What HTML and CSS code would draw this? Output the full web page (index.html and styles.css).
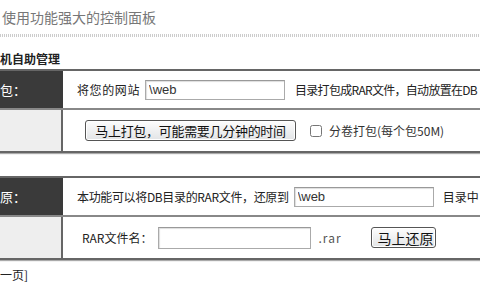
FILE: index.html
```html
<!DOCTYPE html>
<html lang="zh-CN">
<head>
  <meta charset="UTF-8" />
  <title>主机自助管理</title>
  <link rel="stylesheet" href="styles.css">
</head>
<body>
  <h2 class="title">使用功能强大的控制面板</h2>
  <div class="dots"></div>

  <h3 class="section">机自助管理</h3>

  <div class="panel">
    <div class="row">
      <div class="label">包：</div>
      <div class="field">
        <span class="lead">将您的网站</span>
        <input class="text path" type="text" value="\web">
        <span class="after tighter">目录打包成RAR文件，自动放置在DB</span>
      </div>
    </div>
    <div class="row sub">
      <div class="label"></div>
      <div class="field pack">
        <button class="btn wide">马上打包，可能需要几分钟的时间</button>
        <label class="check"><input type="checkbox"> 分卷打包(每个包50M)</label>
      </div>
    </div>
  </div>

  <div class="panel">
    <div class="row">
      <div class="label">原：</div>
      <div class="field">
        <span class="tight">本功能可以将DB目录的RAR文件，还原到</span>
        <input class="text path" type="text" value="\web">
        <span class="after short">目录中</span>
      </div>
    </div>
    <div class="row sub">
      <div class="label"></div>
      <div class="field restore">
        <span>RAR文件名：</span>
        <input class="text rar" type="text" value="">
        <span class="ext">.rar</span>
        <button class="btn">马上还原</button>
      </div>
    </div>
  </div>

  <div class="pager">一页]</div>
</body>
</html>
```

FILE: styles.css
```css
body {
  margin: 0;
  width: 480px;
  height: 300px;
  overflow: hidden;
  background: white;
  color: #222;
  font-family: "Noto Sans CJK SC", "Liberation Sans", sans-serif;
  font-size: 12px;
}

.title {
  margin: 0;
  padding: 8px 0 0 2px;
  height: 18px;
  line-height: 18px;
  font-size: 14px;
  font-weight: normal;
  color: #777;
}

.dots {
  margin-top: 8px;
  height: 3px;
  background: repeating-linear-gradient(90deg, #ccc 0 1px, transparent 1px 2px);
}

.section {
  margin: 15px 0 0 0;
  height: 14px;
  line-height: 14px;
  font-size: 12px;
  font-weight: bold;
  color: #222;
}

.panel {
  width: 480px;
  margin-top: 3px;
  border-top: 2px solid #666;
  border-bottom: 2px solid #666;
  box-shadow: 0 1px 1px #aaa;
}

.panel + .panel {
  margin-top: 23px;
}

.row {
  display: grid;
  grid-template-columns: 63px 1fr;
  height: 37px;
}

.row.sub {
  height: 41px;
  border-top: 2px solid #888;
}

.label {
  background: #3a3a3a;
  color: white;
  font-size: 13px;
  line-height: 37px;
  white-space: nowrap;
}

.row.sub .label {
  background: #eeeeee;
  border-right: 2px solid #666;
}

.field {
  display: flex;
  align-items: center;
  padding-left: 14px;
  white-space: nowrap;
  overflow: hidden;
}

.lead {
  letter-spacing: 0.6px;
}

.tight {
  letter-spacing: -0.35px;
}

.tighter {
  letter-spacing: -0.7px;
}

.text {
  box-sizing: border-box;
  height: 20px;
  margin: 0;
  padding: 0 3px;
  border: 1px solid #aaa;
  border-top-color: #999;
  box-shadow: inset 1px 1px 1px #ddd;
  font-family: "Liberation Sans", sans-serif;
  font-size: 13px;
  color: #333;
}

.path {
  width: 140px;
  margin-left: 5px;
  flex: none;
}

.after {
  margin-left: 10px;
}

.after.short {
  margin-left: 9px;
}

.pack {
  padding-left: 22px;
}

.btn {
  box-sizing: border-box;
  height: 21px;
  margin: 0;
  padding: 0 6px;
  border: 1px solid #555;
  border-radius: 3px;
  background: linear-gradient(#fdfdfd, #e2e4e6);
  box-shadow: inset 0 0 0 1px #fff;
  font-family: "Noto Sans CJK SC", sans-serif;
  font-size: 13px;
  line-height: 18px;
  color: #111;
  flex: none;
}

.btn.wide {
  width: 211px;
  letter-spacing: -0.3px;
}

.check {
  display: flex;
  align-items: center;
  margin-left: 14px;
  color: #333;
}

.check input {
  width: 12px;
  height: 12px;
  margin: 0 7px 0 0;
}

.restore {
  padding-left: 19px;
}

.rar {
  width: 153px;
  height: 22px;
  margin-left: 5px;
  flex: none;
}

.ext {
  margin-left: 8px;
  width: 52px;
  color: #555;
  letter-spacing: 1px;
}

.restore .btn {
  width: 65px;
  font-size: 14px;
}

.pager {
  margin-top: 7px;
  height: 16px;
  line-height: 16px;
  font-size: 12px;
}
```
